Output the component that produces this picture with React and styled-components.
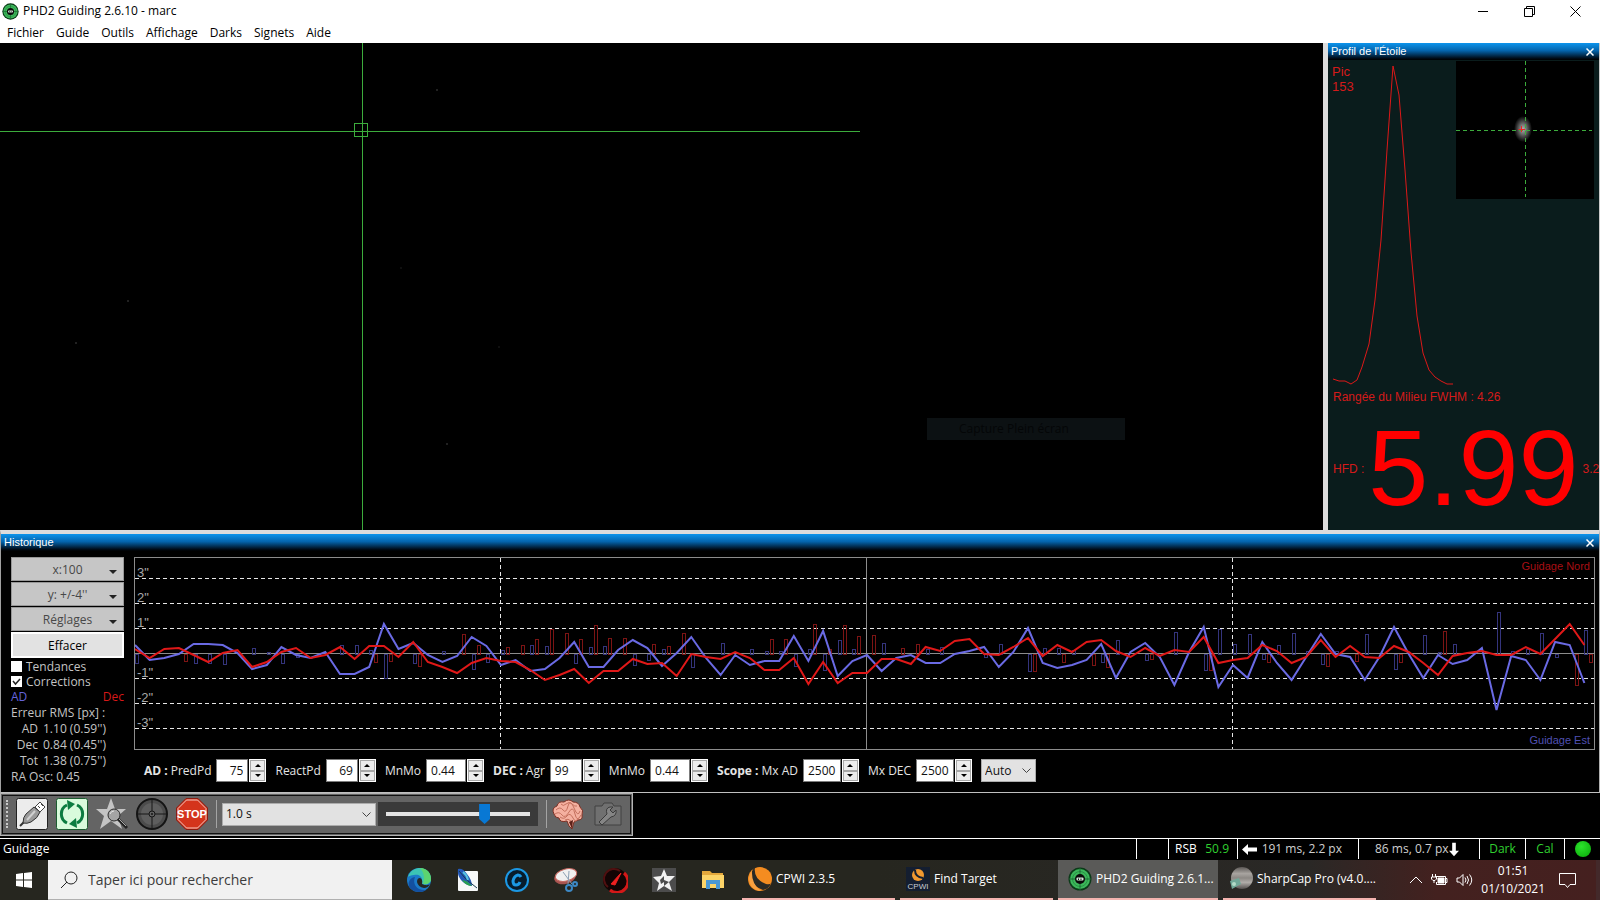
import React from "react";
import styled, { createGlobalStyle } from "styled-components";

const menus = ["Fichier", "Guide", "Outils", "Affichage", "Darks", "Signets", "Aide"];

// vertical offsets from the zero line, one sample per column
const raTrace = [
  9, -6, -4, 0, 10, 10, 9, 1, -15, -11, 7, -1, -4, 2, -20, -20, -13, 30, 5, 11,
  -1, -8, -2, 17, 8, -11, -6, -17, -15, -4, 12, -13, -13, 4, 14, 6, -12, 1, 17,
  -4, -21, -1, -11, -7, -7, 18, -7, 23, -22, -7, -1, -17, -4, -1, -9, -9, 0, 3,
  7, -13, 2, 26, -9, -14, -11, -6, 10, -24, 2, 11, -3, -31, 2, 27, -33, -11,
  -24, 12, -9, -26, -3, 20, 0, -3, -26, -3, 27, 0, -24, -1, -10, -6, 6, -56,
  -2, -6, -26, 12, 9, -29,
];
const decTrace = [
  5, -4, 5, 6, -1, -8, 1, 4, -13, -8, 2, 6, -4, -1, 7, -5, 8, 8, -3, 12, -8,
  -13, -19, -9, -4, -7, -8, -16, -26, -21, -15, -29, -17, -17, -5, -10, -9,
  -22, 0, -3, -5, 2, -4, -16, -16, -4, -30, -8, -29, -19, -19, -5, -5, -10, 7,
  3, 13, 15, 0, -1, 7, 16, -2, 9, 2, 12, 14, 3, -3, 6, -2, 4, 2, 17, -9, -6,
  -4, 9, 3, -9, -3, 14, -3, 8, -3, -4, 8, 2, -9, -21, -2, 1, 3, -1, -1, 7, 0,
  15, 30, 9,
];
// correction pulses : [sample, height]
const raPulses = [
  [0, -9], [4, -9], [5, -9], [6, -10], [8, 6], [9, 2], [10, -9], [11, -3],
  [14, 9], [15, 9], [16, 4], [17, -24], [19, -9], [21, 3], [23, -15], [24, -8],
  [25, 4], [27, 9], [28, 8], [30, -9], [31, 7], [32, 8], [34, -11], [35, -6],
  [36, 5], [38, -13], [40, 11], [42, 5], [43, 3], [44, 3], [45, -12], [46, 5],
  [47, -16], [48, 14], [49, 5], [51, 11], [54, 5], [55, 7], [58, -3], [59, 10],
  [61, -17], [62, 6], [63, 6], [64, 4], [66, -8], [67, 14], [69, -6], [71, 22],
  [73, -16], [74, 25], [75, 10], [76, 20], [77, -5], [78, 9], [79, 21], [80, 3],
  [81, -10], [82, 3], [84, 20], [86, -15], [88, 19], [89, 2], [90, 10],
  [93, 42], [94, 3], [95, 5], [96, 21], [97, -3], [99, 24],
];
const decPulses = [
  [3, -7], [16, -8], [17, -7], [19, -12], [22, 20], [23, 9], [25, 7], [26, 9],
  [27, 15], [28, 25], [29, 21], [30, 15], [31, 29], [32, 16], [33, 16],
  [35, 10], [36, 8], [37, 21], [43, 15], [44, 15], [46, 30], [47, 5], [48, 29],
  [49, 18], [50, 19], [52, 6], [53, 10], [61, -17], [63, -8], [65, -11],
  [66, -13], [69, -5], [73, -16], [77, -8], [81, -12], [83, -7], [86, -8],
  [89, 23], [98, -31], [99, -8],
];

const STEP = 14.64;
const ZERO = 96;
const toPoints = (trace) =>
  trace.map((v, i) => `${(i * STEP).toFixed(1)},${ZERO - v}`).join(" ");

const Pulses = ({ data, shift, color }) => (
  <g fill="none" stroke={color} strokeWidth="1">
    {data.map(([i, v]) => (
      <rect
        key={i}
        x={Math.round(i * STEP + shift) + 0.5}
        y={(v > 0 ? ZERO - v : ZERO) + 0.5}
        width="3"
        height={Math.abs(v)}
      />
    ))}
  </g>
);

const HistoryChart = () => (
  <ChartBox>
    <ChartSvg viewBox="0 0 1459 191" preserveAspectRatio="none">
      <path
        d="M0 20.5H1459M0 45.5H1459M0 70.5H1459M0 120.5H1459M0 145.5H1459M0 170.5H1459M365.5 0V191M1097.5 0V191"
        stroke="#e6e6e6"
        strokeDasharray="4 3"
        fill="none"
      />
      <path d="M0 95.5H1459M731.5 0V191" stroke="#8c8c8c" fill="none" />
      <Pulses data={raPulses} shift={0} color="#34347c" />
      <Pulses data={decPulses} shift={5} color="#7c1414" />
      <polyline points={toPoints(raTrace)} fill="none" stroke="#6a6ae4" strokeWidth="2" />
      <polyline points={toPoints(decTrace)} fill="none" stroke="#e01818" strokeWidth="2" />
    </ChartSvg>
    <Scale>
      <li>3"</li>
      <li>2"</li>
      <li>1"</li>
      <li></li>
      <li>-1"</li>
      <li>-2"</li>
      <li>-3"</li>
    </Scale>
    <ChartTag $color="#a80f14">Guidage Nord</ChartTag>
    <ChartTag $color="#5050b4" $bottom>
      Guidage Est
    </ChartTag>
  </ChartBox>
);

const Spin = ({ id, label, value, width, align }) => (
  <SpinGroup>
    <label htmlFor={id}>{label}</label>
    <SpinInput id={id} defaultValue={value} $width={width} $align={align} />
    <SpinButtons>
      <button type="button" aria-label={`${label} +`}>
        <svg width="6" height="3" viewBox="0 0 6 3"><path d="M0 3L3 0L6 3Z" /></svg>
      </button>
      <button type="button" aria-label={`${label} -`}>
        <svg width="6" height="3" viewBox="0 0 6 3"><path d="M0 0L3 3L6 0Z" /></svg>
      </button>
    </SpinButtons>
  </SpinGroup>
);

const Phd2Icon = ({ size }) => (
  <svg width={size} height={size} viewBox="0 0 24 24">
    <circle cx="12" cy="12" r="11.5" fill="#0b3a18" />
    <circle cx="12" cy="12" r="10" fill="#3cb85a" />
    <circle cx="12" cy="12" r="7.5" fill="none" stroke="#2a9046" />
    <path d="M12 1V23M1 12H23" stroke="#1c6a34" />
    <circle cx="12" cy="12" r="5" fill="#0a0a0a" />
    <rect x="8.5" y="10.5" width="7" height="3" rx="1" fill="#d8e8dc" />
    <path d="M10.5 11.5V13M13 11.5V13" stroke="#111" />
  </svg>
);

const CableIcon = () => (
  <svg width="32" height="32" viewBox="0 0 32 32">
    <rect x="0.5" y="0.5" width="31" height="31" rx="2" fill="#ececec" stroke="#222" />
    <path d="M4 28L9 23" stroke="#333" strokeWidth="2" />
    <path d="M7 25Q7 19 10 16L18 9L24 14Q22 20 15 24Q11 26 7 25Z" fill="#9a9a9a" stroke="#333" />
    <path d="M11 22L19 13" stroke="#d0d0d0" strokeWidth="2" />
    <path d="M19 9L24 4L29 9L24 14Z" fill="#fff" stroke="#444" />
    <path d="M22 8L24 10M25 6L27 8" stroke="#444" />
  </svg>
);

const LoopIcon = () => (
  <svg width="32" height="32" viewBox="0 0 32 32">
    <rect x="0.5" y="0.5" width="31" height="31" rx="2" fill="#d9fbdc" stroke="#1c5c30" />
    <path d="M11 25A10 10 0 0 1 11 7" fill="none" stroke="#0c7c40" strokeWidth="3" />
    <path d="M21 7A10 10 0 0 1 21 25" fill="none" stroke="#0c7c40" strokeWidth="3" />
    <path d="M11 2L19 6L12 12Z" fill="#0c7c40" />
    <path d="M21 30L13 26L20 20Z" fill="#0c7c40" />
  </svg>
);

const StarSearchIcon = () => (
  <svg width="32" height="32" viewBox="0 0 32 32">
    <path d="M15 0L19 11L30 11L22 18L26 31L15 23L4 31L8 18L0 11L11 11Z" fill="#c4c4c4" />
    <circle cx="18" cy="17" r="6" fill="#a4a4a4" stroke="#2c2c2c" />
    <path d="M14 16Q15 13 18 13" fill="none" stroke="#e4e4e4" />
    <path d="M22 21L31 30" stroke="#222" strokeWidth="3" />
    <path d="M23 21L30 28" stroke="#aaa" />
  </svg>
);

const TargetIcon = () => (
  <svg width="32" height="32" viewBox="0 0 32 32">
    <circle cx="16" cy="16" r="15" fill="#4c4c4c" stroke="#141414" strokeWidth="2" />
    <circle cx="16" cy="16" r="11" fill="#5e5e5e" />
    <path d="M16 1V31M1 16H31" stroke="#161616" strokeWidth="1" />
    <circle cx="16" cy="16" r="3" fill="#606060" stroke="#161616" />
    <circle cx="16" cy="16" r="1" fill="#161616" />
  </svg>
);

const StopIcon = () => (
  <svg width="32" height="32" viewBox="0 0 32 32">
    <path d="M10 0.5H22L31.500 10V22L22 31.500H10L0.500 22V10Z" fill="#d4341c" stroke="#8c1c10" />
    <path d="M10.500 2H21.500L30 10.500V21.500L21.500 30H10.500L2 21.500V10.500Z" fill="none" stroke="#f4c8c0" />
    <text x="16" y="20" textAnchor="middle" fontFamily="Liberation Sans Narrow, Liberation Sans, sans-serif" fontSize="11" fontWeight="700" fill="#fff">
      STOP
    </text>
  </svg>
);

const BrainIcon = () => (
  <svg width="32" height="32" viewBox="0 0 32 32">
    <path
      d="M2 16Q-1 10 5 8Q6 3 12 4Q17 0 21 4Q27 4 28 9Q32 12 30 17Q31 22 26 22L22 24L20 31L17 28L15 23Q8 25 7 20Q3 20 2 16Z"
      fill="#f4b0a0"
      stroke="#7c3024"
    />
    <path
      d="M4 12Q8 8 11 12T16 8T22 10T28 13M3 16Q7 13 10 17T17 14T23 16T29 17M8 19Q12 22 15 18T21 20T26 20M9 6Q11 9 14 6T20 6T25 8M13 22Q16 20 19 23"
      fill="none"
      stroke="#c4705e"
    />
    <path d="M17 24L21 22L20 31Z" fill="#5c2018" />
  </svg>
);

const CameraToolIcon = () => (
  <svg width="28" height="24" viewBox="0 0 28 24">
    <path d="M1 4H8L10 1H18L20 4H27V23H1Z" fill="#707070" stroke="#404040" />
    <path
      d="M5 20L13 12Q11 6 16 5L19 5L16 8L19 11L22 8Q23 14 17 15L8 23Z"
      fill="#858585"
      stroke="#3a3a3a"
    />
  </svg>
);

const EdgeIcon = () => (
  <svg width="26" height="26" viewBox="0 0 26 26">
    <circle cx="13" cy="13" r="12" fill="#1b7ac8" />
    <path d="M2 10C4 3 10 1 14 1C21 1 25 6 25 12C25 16 21 18 17 17C14 16 16 15 16 13C16 9 12 7 8 8C5 8 3 9 2 10Z" fill="#3cc4b4" />
    <path d="M14 1C21 1 25 6 25 12C25 16 21 18 17 17Q20 8 14 1Z" fill="#5cd470" />
    <path d="M9 10C6 17 11 24 20 23C16 26 8 26 4 21C1 17 3 11 9 10Z" fill="#1350a0" />
    <path d="M16 17C20 19 23 18 24 17Q22 21 18 21Q12 20 11 15Q11 11 14 11Q17 12 16 17Z" fill="#262622" />
  </svg>
);

const FeatherIcon = () => (
  <svg width="24" height="24" viewBox="0 0 24 24">
    <rect x="2" y="3" width="20" height="20" rx="1" fill="#f6f8f8" />
    <path d="M2 1Q7 0 11 6Q16 12 16 18Q9 17 5 12Q1 7 2 1Z" fill="#2458b8" />
    <path d="M6 12Q11 12 16 18Q10 18 6 12Z" fill="#28a050" />
    <path d="M3 3Q9 12 21 20" fill="none" stroke="#183c50" />
    <path d="M7 4Q11 7 12 12" fill="none" stroke="#58c4e0" strokeWidth="2" />
  </svg>
);

const CIcon = () => (
  <svg width="26" height="26" viewBox="0 0 26 26">
    <circle cx="13" cy="13" r="11" fill="#071c2c" stroke="#1c98e4" strokeWidth="2" />
    <path d="M17 10Q16 8 14 8Q10 9 9 14Q9 18 12 18Q15 18 16 15" fill="none" stroke="#1c98e4" strokeWidth="3" />
  </svg>
);

const SnipIcon = () => (
  <svg width="26" height="26" viewBox="0 0 26 26">
    <ellipse cx="12" cy="10" rx="11" ry="7" transform="rotate(-14 12 10)" fill="#a85450" />
    <ellipse cx="13" cy="8" rx="11" ry="6" transform="rotate(-14 13 8)" fill="#f0f0f0" stroke="#c46860" />
    <path d="M10 5L19 17M16 4L15 17" stroke="#8ca0b4" />
    <circle cx="16" cy="21" r="3" fill="none" stroke="#3c88c4" strokeWidth="2" />
    <circle cx="22" cy="17" r="2" fill="none" stroke="#3c88c4" strokeWidth="2" />
  </svg>
);

const GaugeIcon = () => (
  <svg width="26" height="26" viewBox="0 0 26 26">
    <circle cx="13" cy="13" r="12" fill="#120404" />
    <path d="M22 6A11 11 0 0 1 8 23" fill="none" stroke="#d41818" strokeWidth="3" />
    <path d="M6 20A10 10 0 0 1 18 4" fill="none" stroke="#501010" strokeWidth="2" />
    <path d="M9 17L19 6L13 18Z" fill="#f02020" stroke="#f02020" />
  </svg>
);

const StarTileIcon = () => (
  <svg width="24" height="24" viewBox="0 0 24 24">
    <rect width="24" height="24" fill="#4c4c4c" />
    <path d="M12 1L15 8L23 8L17 14L20 23L12 18L5 23L7 15L1 9L9 8Z" fill="#f2f2f2" />
    <path d="M12 8L8 12L9 16L12 14L12 18L17 14L12 12Z" fill="#4c4c4c" />
  </svg>
);

const FolderIcon = () => (
  <svg width="24" height="24" viewBox="0 0 24 24">
    <path d="M1 3H9L11 5H22V20H1Z" fill="#e4a83c" />
    <path d="M1 7H23V20H1Z" fill="#fcd468" />
    <path d="M5 21V12H19V21H15V16H9V21Z" fill="#4a98d4" />
  </svg>
);

const CpwiIcon = () => (
  <svg width="24" height="24" viewBox="0 0 24 24">
    <circle cx="12" cy="12" r="12" fill="#f48c20" />
    <path d="M7 0Q5 12 18 17Q22 18 23 16Q21 22 15 23Q6 20 3 12Q2 5 7 0Z" fill="#2a2a26" />
    <path d="M4 3Q-2 12 4 20Q8 24 13 24Q3 17 4 3Z" fill="#f8a040" />
  </svg>
);

const FindIcon = () => (
  <svg width="24" height="24" viewBox="0 0 24 24">
    <rect width="24" height="24" fill="#141e30" />
    <circle cx="12" cy="8" r="6" fill="#f09830" />
    <path d="M9 3Q9 10 17 11" fill="none" stroke="#141e30" strokeWidth="2" />
    <text x="12" y="22" textAnchor="middle" fontFamily="Liberation Sans, sans-serif" fontSize="8" fill="#c8ccd4">
      CPWI
    </text>
  </svg>
);

const PlanetIcon = () => (
  <svg width="24" height="24" viewBox="0 0 24 24">
    <defs>
      <linearGradient id="planet" x2="0" y2="1">
        <stop offset="0" stopColor="#5c5856" />
        <stop offset="0.3" stopColor="#a8a4a0" />
        <stop offset="0.5" stopColor="#8c8884" />
        <stop offset="0.7" stopColor="#b0aca8" />
        <stop offset="1" stopColor="#54504e" />
      </linearGradient>
    </defs>
    <circle cx="13" cy="11" r="11" fill="url(#planet)" />
    <path d="M1 14L10 11L12 17L3 22Z" fill="#70a898" />
    <circle cx="5" cy="17" r="2" fill="#b4dcc8" />
  </svg>
);

const profilePoints =
  "5,319 11,321 17,321 23,324 29,320 34,307 41,284 47,240 53,180 59,90 65,6 71,35 77,110 83,192 89,256 95,293 101,310 107,317 113,321 119,324 125,324";

const App = () => (
  <Page>
    <GlobalStyle />
    <TitleBar>
      <Phd2Icon size={17} />
      <h1>PHD2 Guiding 2.6.10 - marc</h1>
      <WindowButton type="button" aria-label="Réduire">
        <svg width="11" height="11" viewBox="0 0 11 11"><path d="M0 5.5H10" /></svg>
      </WindowButton>
      <WindowButton type="button" aria-label="Restaurer">
        <svg width="11" height="11" viewBox="0 0 11 11"><path d="M0.500 2.500H8.500V10.500H0.500ZM2.500 2.500V0.500H10.500V8.500H8.500" /></svg>
      </WindowButton>
      <WindowButton type="button" aria-label="Fermer">
        <svg width="11" height="11" viewBox="0 0 11 11"><path d="M0.500 0.500L10.500 10.500M10.500 0.500L0.500 10.500" /></svg>
      </WindowButton>
    </TitleBar>
    <MenuBar>
      {menus.map((name) => (
        <button type="button" key={name}>{name}</button>
      ))}
    </MenuBar>

    <TopRow>
      <Camera>
        <CameraSvg>
          <path d="M362.500 0V2000M0 88.500H860" stroke="#3cac3c" />
          <rect x="354.500" y="80.500" width="13" height="13" fill="none" stroke="#3cac3c" />
          <g fill="#2c2c2c">
            <circle cx="437" cy="47" r="1" />
            <circle cx="128" cy="258" r="1" />
            <circle cx="76" cy="300" r="1" />
            <circle cx="447" cy="401" r="1" />
            <circle cx="401" cy="225" r="1" fill="#151515" />
            <circle cx="499" cy="304" r="1" fill="#151515" />
          </g>
        </CameraSvg>
        <GhostItem>Capture Plein écran</GhostItem>
      </Camera>
      <StarPanel>
        <PaneHeader>
          <h2>Profil de l'Étoile</h2>
          <PaneClose />
        </PaneHeader>
        <StarBody>
          <Peak>
            Pic
            <br />
            153
          </Peak>
          <Profile width="130" height="330" viewBox="0 0 130 330">
            <polyline points={profilePoints} fill="none" stroke="#dc1818" />
          </Profile>
          <Thumb width="138" height="138" viewBox="0 0 138 138">
            <defs>
              <radialGradient id="star">
                <stop offset="0" stopColor="#b0b0b0" />
                <stop offset="0.400" stopColor="#6c6c6c" />
                <stop offset="1" stopColor="#000" />
              </radialGradient>
            </defs>
            <rect width="138" height="138" fill="#000" />
            <ellipse cx="67" cy="68" rx="9" ry="13" fill="url(#star)" />
            <path d="M69.500 0V136M0 69.500H136" stroke="#3cac3c" strokeDasharray="4 3" />
            <path d="M65.500 65V71M62.500 68.500H69" stroke="#f02020" />
          </Thumb>
          <Fwhm>Rangée du Milieu FWHM : 4.26</Fwhm>
          <Hfd>
            <span>HFD :</span>
            <strong>5.99</strong>
            <span>3.2</span>
          </Hfd>
        </StarBody>
      </StarPanel>
    </TopRow>

    <HistoryPanel>
      <PaneHeader>
        <h2>Historique</h2>
        <PaneClose />
      </PaneHeader>
      <HistoryBody>
        <Side>
          {["x:100", "y: +/-4''", "Réglages"].map((name) => (
            <SideButton type="button" key={name}>
              {name}
              <svg width="8" height="4" viewBox="0 0 8 4"><path d="M0 0H8L4 4Z" fill="#222" /></svg>
            </SideButton>
          ))}
          <SideButton type="button" $primary>Effacer</SideButton>
          <Check>
            <input type="checkbox" />
            Tendances
          </Check>
          <Check>
            <input type="checkbox" defaultChecked />
            Corrections
          </Check>
          <Legend>
            <Colored $color="#6464dc">AD</Colored>
            <Colored $color="#d81818">Dec</Colored>
          </Legend>
          <Stats>
            <caption>Erreur RMS [px] :</caption>
            <tbody>
              <tr><th>AD</th><td>1.10 (0.59'')</td></tr>
              <tr><th>Dec</th><td>0.84 (0.45'')</td></tr>
              <tr><th>Tot</th><td>1.38 (0.75'')</td></tr>
            </tbody>
          </Stats>
          <p>RA Osc: 0.45</p>
        </Side>
        <ChartColumn>
          <HistoryChart />
          <Controls>
            <ControlSet>
              <b>AD :</b>
              <Spin id="pred" label="PredPd" value="75" width={32} align="right" />
            </ControlSet>
            <Spin id="react" label="ReactPd" value="69" width={32} align="right" />
            <Spin id="mnra" label="MnMo" value="0.44" width={40} />
            <ControlSet>
              <b>DEC :</b>
              <Spin id="agr" label="Agr" value="99" width={32} />
            </ControlSet>
            <Spin id="mndec" label="MnMo" value="0.44" width={40} />
            <ControlSet>
              <b>Scope :</b>
              <Spin id="mxra" label="Mx AD" value="2500" width={38} />
            </ControlSet>
            <Spin id="mxdec" label="Mx DEC" value="2500" width={38} />
            <SelectBox $width={55}>
              <select aria-label="Mode DEC" defaultValue="Auto">
                <option>Auto</option>
              </select>
              <SelectArrow />
            </SelectBox>
          </Controls>
        </ChartColumn>
      </HistoryBody>
    </HistoryPanel>

    <ToolStrip>
      <ToolBar>
        <Grip />
        <ToolButton type="button" aria-label="Connecter"><CableIcon /></ToolButton>
        <ToolButton type="button" aria-label="Boucle"><LoopIcon /></ToolButton>
        <ToolButton type="button" aria-label="Étoile"><StarSearchIcon /></ToolButton>
        <ToolButton type="button" aria-label="Guider"><TargetIcon /></ToolButton>
        <ToolButton type="button" aria-label="Stop"><StopIcon /></ToolButton>
        <Divider />
        <SelectBox $width={154}>
          <select aria-label="Exposition" defaultValue="1.0 s">
            <option>1.0 s</option>
          </select>
          <SelectArrow />
        </SelectBox>
        <SliderBox>
          <input type="range" aria-label="Gamma" min="0" max="100" defaultValue="70" />
        </SliderBox>
        <Divider />
        <ToolButton type="button" aria-label="Cerveau"><BrainIcon /></ToolButton>
        <ToolButton type="button" aria-label="Caméra"><CameraToolIcon /></ToolButton>
      </ToolBar>
    </ToolStrip>

    <StatusBar>
      <StatusText>Guidage</StatusText>
      <StatusCell $width={32} />
      <StatusCell $width={69} $pad="0 8px 0 6px">
        <span>RSB</span>
        <Colored $color="#30d030">50.9</Colored>
      </StatusCell>
      <StatusCell $width={121} $pad="0 16px 0 4px">
        <svg width="15" height="11" viewBox="0 0 15 11"><path d="M0 5.500L6 0V3.500H15V7.500H6V11Z" fill="#fff" /></svg>
        <Colored $color="#d0d0d0">191 ms, 2.2 px</Colored>
      </StatusCell>
      <StatusCell $width={121} $pad="0 20px 0 16px">
        <Colored $color="#d0d0d0">86 ms, 0.7 px</Colored>
        <svg width="10" height="15" viewBox="0 0 11 15"><path d="M5.500 15L0 9H3.500V0H7.500V9H11Z" fill="#fff" /></svg>
      </StatusCell>
      <StatusCell $width={46} $center><Colored $color="#30d030">Dark</Colored></StatusCell>
      <StatusCell $width={39} $center><Colored $color="#30d030">Cal</Colored></StatusCell>
      <StatusCell $width={36} $center><Led /></StatusCell>
    </StatusBar>

    <TaskBar>
      <StartButton type="button" aria-label="Démarrer">
        <svg width="16" height="16" viewBox="0 0 16 16">
          <path d="M0 2L7 1V7.500H0ZM8 1L16 0V7.500H8ZM0 8.500H7V15L0 14ZM8 8.500H16V16L8 15Z" fill="#fff" />
        </svg>
      </StartButton>
      <Search>
        <svg width="18" height="18" viewBox="0 0 18 18">
          <circle cx="11" cy="7" r="6" fill="none" stroke="#222" />
          <path d="M7 11L1 17" stroke="#222" />
        </svg>
        <input aria-label="Rechercher" placeholder="Taper ici pour rechercher" />
      </Search>
      <Pinned>
        {[EdgeIcon, FeatherIcon, CIcon, SnipIcon, GaugeIcon, StarTileIcon, FolderIcon].map(
          (Icon, i) => (
            <button type="button" key={i} aria-label={`Application ${i + 1}`}>
              <Icon />
            </button>
          )
        )}
      </Pinned>
      <Tasks>
        <Task type="button"><CpwiIcon />CPWI 2.3.5</Task>
        <Task type="button"><FindIcon />Find Target</Task>
        <Task type="button" $active><Phd2Icon size={24} />PHD2 Guiding 2.6.1...</Task>
        <Task type="button"><PlanetIcon />SharpCap Pro (v4.0....</Task>
      </Tasks>
      <Tray>
        <svg width="14" height="8" viewBox="0 0 14 8"><path d="M1 7L7 1L13 7" /></svg>
        <svg width="17" height="12" viewBox="0 0 17 12">
          <path d="M5 2.500H14.500V10.500H5.500V8M14.500 4.500H16V8.500H14.500M1.500 0V3M4.500 0V3M0.500 3H5.500V5L4 6.500H2L0.500 5ZM3 6.500V9" />
          <path d="M7 4H13V9H7Z" fill="#fff" />
        </svg>
        <svg width="17" height="14" viewBox="0 0 17 14">
          <path d="M1 5H3.500L7 1.500V12.500L3.500 9H1ZM9 4.500Q11 7 9 9.500M11 3Q14 7 11 11M13.500 1.500Q18 7 13.500 12.500" />
        </svg>
        <Clock>
          01:51
          <br />
          01/10/2021
        </Clock>
        <svg width="17" height="17" viewBox="0 0 17 17">
          <path d="M0.500 1.500H16.500V12.500H11L8.500 15.500L6 12.500H0.500Z" />
        </svg>
      </Tray>
    </TaskBar>
  </Page>
);

const PaneClose = () => (
  <CloseButton type="button" aria-label="Fermer">
    <svg width="8" height="8" viewBox="0 0 8 8"><path d="M0.500 0.500L7.500 7.500M7.500 0.500L0.500 7.500" stroke="#fff" strokeWidth="1.500" /></svg>
  </CloseButton>
);

const SelectArrow = () => (
  <svg width="9" height="5" viewBox="0 0 9 5"><path d="M0.500 0.500L4.500 4.500L8.500 0.500" fill="none" stroke="#444" /></svg>
);

const GlobalStyle = createGlobalStyle`
  * {
    box-sizing: border-box;
  }
  body {
    margin: 0;
    background: #000;
    overflow: hidden;
  }
  button, input, select {
    font: inherit;
    color: inherit;
    margin: 0;
    padding: 0;
    border: 0;
    background: none;
  }
  h1, h2, p, ul {
    margin: 0;
    padding: 0;
    font-size: inherit;
    font-weight: 400;
  }
  svg {
    display: block;
    flex: none;
  }
`;

const Page = styled.div`
  display: flex;
  flex-direction: column;
  min-height: 100vh;
  font-family: "Open Sans", "Noto Sans", sans-serif;
  font-size: 12px;
  line-height: 16px;
  color: #d8d8d8;
`;

const TitleBar = styled.header`
  display: flex;
  align-items: center;
  height: 22px;
  padding: 0 4px 0 2px;
  gap: 4px;
  background: #fff;
  color: #000;
  h1 {
    flex: 1;
  }
`;

const WindowButton = styled.button`
  display: grid;
  place-items: center;
  width: 42px;
  height: 20px;
  svg {
    fill: none;
    stroke: #000;
  }
`;

const MenuBar = styled.nav`
  display: flex;
  height: 21px;
  padding-left: 7px;
  gap: 12px;
  background: #fff;
  color: #000;
`;

const TopRow = styled.main`
  display: flex;
  flex: 1;
  background: #dcdcdc;
  border-right: 1px solid #c8c8c8;
`;

const Camera = styled.section`
  position: relative;
  flex: 1;
  background: #000;
`;

const CameraSvg = styled.svg`
  position: absolute;
  inset: 0;
  width: 100%;
  height: 100%;
`;

const GhostItem = styled.div`
  position: absolute;
  left: 927px;
  top: 375px;
  width: 198px;
  height: 22px;
  padding: 3px 32px;
  background: #0c1113;
  color: #040607;
`;

const StarPanel = styled.section`
  display: flex;
  flex-direction: column;
  width: 271px;
  margin-left: 5px;
  background: #0a1c1c;
`;

const PaneHeader = styled.div`
  display: flex;
  align-items: center;
  justify-content: space-between;
  height: 17px;
  padding: 1px 5px 1px 3px;
  background: linear-gradient(#0c94ec, #0464ac 45%, #000c18 90%, #000);
  color: #fff;
  font: 11px/15px "Liberation Sans", sans-serif;
`;

const CloseButton = styled.button`
  padding: 0;
`;

const StarBody = styled.div`
  position: relative;
  display: flex;
  flex-direction: column;
  flex: 1;
  overflow: hidden;
  color: #d41a1a;
  font: 12px/15px "Liberation Sans", sans-serif;
`;

const Peak = styled.p`
  position: absolute;
  left: 4px;
  top: 4px;
  font-size: 13px;
`;

const Profile = styled.svg`
  height: 330px;
`;

const Thumb = styled.svg`
  position: absolute;
  right: 5px;
  top: 1px;
`;

const Fwhm = styled.p`
  padding-left: 5px;
`;

const Hfd = styled.div`
  display: flex;
  align-items: center;
  gap: 4px;
  padding: 0 0 0 5px;
  white-space: nowrap;
  span {
    padding-top: 4px;
  }
  strong {
    color: #f00;
    font-size: 108px;
    font-weight: 400;
    line-height: 125px;
  }
`;

const HistoryPanel = styled.section`
  border-top: 4px solid #dcdcdc;
  border-left: 1px solid #a0a0a0;
  border-right: 1px solid #b0b0b0;
  border-bottom: 1px solid #c0c0c0;
  background: #000;
`;

const HistoryBody = styled.div`
  display: flex;
  gap: 10px;
  padding: 6px 4px 7px 10px;
`;

const Side = styled.aside`
  display: flex;
  flex-direction: column;
  width: 113px;
  color: #c4c4c4;
`;

const SideButton = styled.button`
  position: relative;
  height: ${({ $primary }) => ($primary ? "26px" : "24px")};
  margin-bottom: 1px;
  padding-top: 1px;
  border: ${({ $primary }) => ($primary ? "2px solid #fff" : "1px solid #989898")};
  background: ${({ $primary }) => ($primary ? "#e2e2e2" : "#c6c6c6")};
  color: ${({ $primary }) => ($primary ? "#000" : "#484848")};
  svg {
    position: absolute;
    right: 6px;
    top: 12px;
  }
`;

const Check = styled.label`
  display: flex;
  align-items: center;
  gap: 4px;
  height: 15px;
  input {
    appearance: none;
    width: 11px;
    height: 11px;
    background: #fff;
  }
  input:checked {
    background: #fff
      url("data:image/svg+xml,%3Csvg xmlns='http://www.w3.org/2000/svg' viewBox='0 0 11 11'%3E%3Cpath d='M2 5L4.500 8L9 3' fill='none' stroke='%23222' stroke-width='1.500'/%3E%3C/svg%3E");
  }
`;

const Legend = styled.div`
  display: flex;
  justify-content: space-between;
  height: 16px;
`;

const Colored = styled.span`
  color: ${({ $color }) => $color};
`;

const Stats = styled.table`
  border-spacing: 0;
  caption {
    text-align: left;
  }
  th {
    width: 32px;
    padding: 0 5px 0 0;
    text-align: right;
    font-weight: 400;
  }
  td {
    padding: 0;
    white-space: nowrap;
  }
`;

const ChartColumn = styled.div`
  flex: 1;
  min-width: 0;
`;

const ChartBox = styled.div`
  position: relative;
  height: 193px;
  border: 1px solid #8c8c8c;
  font-family: "Liberation Sans", sans-serif;
`;

const ChartSvg = styled.svg`
  width: 100%;
  height: 191px;
`;

const Scale = styled.ul`
  position: absolute;
  left: 2px;
  top: 2px;
  list-style: none;
  font-size: 13px;
  line-height: 25px;
  color: #a8a8a8;
  li {
    height: 25px;
  }
`;

const ChartTag = styled.span`
  position: absolute;
  right: 4px;
  ${({ $bottom }) => ($bottom ? "bottom: 1px;" : "top: 0;")}
  color: ${({ $color }) => $color};
  font-size: 11px;
`;

const Controls = styled.form`
  display: flex;
  align-items: center;
  gap: 9px;
  height: 23px;
  margin: 9px 0 0 10px;
  color: #e4e4e4;
  white-space: nowrap;
`;

const ControlSet = styled.div`
  display: flex;
  align-items: center;
  gap: 3px;
`;

const SpinGroup = styled.div`
  display: flex;
  align-items: center;
  label {
    margin-right: 5px;
  }
`;

const SpinInput = styled.input`
  width: ${({ $width }) => $width}px;
  height: 23px;
  padding: 0 4px;
  border: 1px solid #7c7c7c;
  background: #fff;
  color: #111;
  text-align: ${({ $align }) => $align || "left"};
`;

const SpinButtons = styled.div`
  display: grid;
  width: 17px;
  height: 23px;
  margin-left: 1px;
  border: 1px solid #fff;
  background: #fff;
  button {
    display: grid;
    place-items: center;
    border: 1px solid #a8a8a8;
    background: #ececec;
  }
`;

const SelectBox = styled.div`
  position: relative;
  width: ${({ $width }) => $width}px;
  height: 23px;
  border: 1px solid #acacac;
  background: #e2e2e2;
  color: #111;
  select {
    appearance: none;
    width: 100%;
    height: 100%;
    padding: 0 3px;
  }
  svg {
    position: absolute;
    right: 4px;
    top: 8px;
    pointer-events: none;
  }
`;

const ToolStrip = styled.div`
  display: flex;
  height: 46px;
  padding-bottom: 2px;
  border-bottom: 1px solid #fff;
`;

const ToolBar = styled.div`
  display: flex;
  align-items: center;
  gap: 8px;
  padding: 0 8px 1px 5px;
  border: 1px solid #b4b4b4;
  outline: 1px solid #111;
  outline-offset: -3px;
  background: #646464;
`;

const Grip = styled.span`
  height: 28px;
  border-left: 2px dotted #c8c8c8;
`;

const ToolButton = styled.button`
  display: grid;
  place-items: center;
  width: 32px;
  height: 32px;
`;

const Divider = styled.span`
  width: 1px;
  height: 28px;
  margin-right: -3px;
  background: #a4a4a4;
`;

const SliderBox = styled.div`
  display: flex;
  align-items: center;
  width: 160px;
  height: 24px;
  margin-left: -6px;
  padding: 0 8px;
  background: #3a3a3a;
  input {
    appearance: none;
    width: 100%;
    height: 20px;
    background: linear-gradient(#e4e4e4, #e4e4e4) center / 100% 4px no-repeat;
  }
  input::-webkit-slider-thumb {
    appearance: none;
    width: 11px;
    height: 20px;
    background: #0878d4;
    clip-path: polygon(0 0, 100% 0, 100% 75%, 50% 100%, 0 75%);
  }
`;

const StatusBar = styled.footer`
  display: flex;
  height: 21px;
  background: #000;
  color: #fff;
  line-height: 20px;
`;

const StatusText = styled.span`
  flex: 1;
  padding-left: 3px;
`;

const StatusCell = styled.div`
  display: flex;
  align-items: center;
  justify-content: ${({ $center }) => ($center ? "center" : "space-between")};
  width: ${({ $width }) => $width}px;
  height: 20px;
  padding: ${({ $pad }) => $pad || "0"};
  border-left: 1px solid #fff;
  white-space: nowrap;
`;

const Led = styled.span`
  width: 16px;
  height: 16px;
  border-radius: 50%;
  background: radial-gradient(circle at 40% 35%, #2ce42c, #08a808);
`;

const TaskBar = styled.nav`
  display: flex;
  height: 40px;
  border-right: 4px solid #43292a;
  background: linear-gradient(90deg, #26261f 0 55%, #2a2826 82%, #43211f 90%, #45201f);
  color: #fff;
`;

const StartButton = styled.button`
  display: grid;
  place-items: center;
  width: 48px;
`;

const Search = styled.div`
  display: flex;
  align-items: center;
  gap: 10px;
  width: 344px;
  padding-left: 12px;
  background: #f1f1f1;
  border-bottom: 1px solid #b0b0b0;
  input {
    flex: 1;
    outline: 0;
    font-size: 14px;
    color: #333;
  }
  input::placeholder {
    color: #3c3c3c;
    opacity: 1;
  }
`;

const Pinned = styled.div`
  display: flex;
  padding-left: 2px;
  button {
    display: grid;
    place-items: center;
    width: 49px;
  }
`;

const Tasks = styled.div`
  display: flex;
  flex: 1;
  gap: 5px;
  padding-left: 5px;
`;

const Task = styled.button`
  display: flex;
  align-items: center;
  gap: 4px;
  width: ${({ $active }) => ($active ? "160px" : "153px")};
  padding-left: ${({ $active }) => ($active ? "10px" : "6px")};
  border-bottom: 2px solid #f4b4b0;
  background: ${({ $active }) => ($active ? "#5a5a58" : "transparent")};
  white-space: nowrap;
`;

const Tray = styled.div`
  display: flex;
  align-items: center;
  gap: 8px;
  padding-right: 20px;
  svg {
    fill: none;
    stroke: #fff;
  }
`;

const Clock = styled.time`
  padding-right: 6px;
  text-align: center;
  line-height: 18px;
`;

export default App;
